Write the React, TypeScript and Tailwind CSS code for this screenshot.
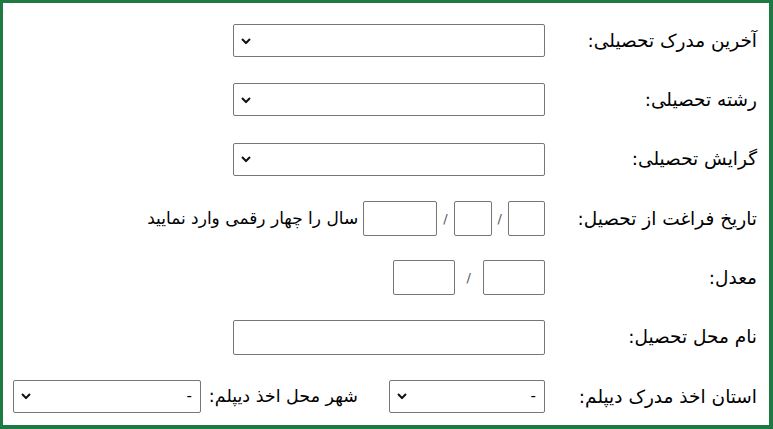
import React from "react";

const font = { fontFamily: '"DejaVu Sans", "Noto Sans", sans-serif' };

function Chevron() {
  return (
    <svg
      className="pointer-events-none absolute left-[8px] top-1/2 -translate-y-1/2"
      width="10"
      height="7"
      viewBox="0 0 10 7"
    >
      <path d="M1 1.5 L5 5.5 L9 1.5" fill="none" stroke="#111" strokeWidth="2" />
    </svg>
  );
}

function Select({ width, value = "" }: { width: string; value?: string }) {
  return (
    <div className={`relative h-[33px] ${width}`}>
      <select
        className="h-full w-full appearance-none rounded-[2px] border border-[#767676] bg-white pr-[8px] text-[15px] text-black outline-none"
        defaultValue={value}
      >
        <option value={value}>{value}</option>
      </select>
      <Chevron />
    </div>
  );
}

function Box({ width }: { width: string }) {
  return (
    <input
      type="text"
      className={`h-[35px] ${width} rounded-[2px] border border-[#767676] bg-white outline-none`}
    />
  );
}

function Row({ label, children }: { label: string; children: React.ReactNode }) {
  return (
    <div className="flex h-[59.3px] items-center">
      <div className="w-[224px] shrink-0 pr-[12px] text-[18.5px] text-black">{label}</div>
      <div className="flex items-center">{children}</div>
    </div>
  );
}

export default function App() {
  return (
    <div
      dir="rtl"
      style={font}
      className="box-border h-[429px] w-[773px] border-b-4 border-l-[3px] border-r-4 border-t-[3px] border-[#1d7a43] bg-white pt-[8px]"
    >
      <Row label="آخرین مدرک تحصیلی:">
        <Select width="w-[312px]" />
      </Row>
      <Row label="رشته تحصیلی:">
        <Select width="w-[312px]" />
      </Row>
      <Row label="گرایش تحصیلی:">
        <Select width="w-[312px]" />
      </Row>
      <Row label="تاریخ فراغت از تحصیل:">
        <Box width="w-[37px]" />
        <span className="mx-[6px] text-[13px] text-[#555]">/</span>
        <Box width="w-[38px]" />
        <span className="mx-[6px] text-[13px] text-[#555]">/</span>
        <Box width="w-[74px]" />
        <span className="mr-[5px] text-[17px] text-black">سال را چهار رقمی وارد نمایید</span>
      </Row>
      <Row label="معدل:">
        <Box width="w-[62px]" />
        <span className="mx-[12px] text-[13px] text-[#555]">/</span>
        <Box width="w-[62px]" />
      </Row>
      <Row label="نام محل تحصیل:">
        <Box width="w-[312px]" />
      </Row>
      <Row label="استان اخذ مدرک دیپلم:">
        <Select width="w-[156px]" value="-" />
        <span className="ml-[7px] mr-[31px] w-[150px] whitespace-nowrap text-[17.5px] text-black">
          شهر محل اخذ دیپلم:
        </span>
        <Select width="w-[188px]" value="-" />
      </Row>
    </div>
  );
}
